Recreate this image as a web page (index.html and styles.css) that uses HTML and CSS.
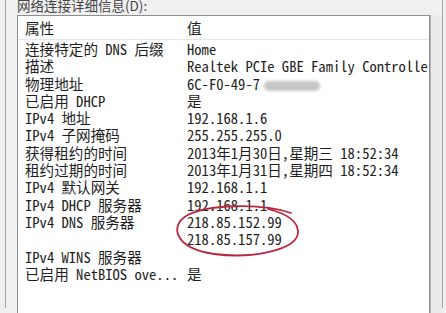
FILE: index.html
```html
<!DOCTYPE html>
<html lang="zh-CN">
<head>
    <meta charset="UTF-8">
    <title>网络连接详细信息</title>
    <link rel="stylesheet" href="styles.css">
</head>
<body>
    <div class="dialog">
        <div class="caption">网络连接详细信息(D):</div>
        <div class="panel">
            <div class="list">
                <div class="head">
                    <span>属性</span>
                    <span>值</span>
                </div>
                <div class="rows">
                    <span>连接特定的 DNS 后缀</span><span>Home</span>
                    <span>描述</span><span>Realtek PCIe GBE Family Controller</span>
                    <span>物理地址</span><span>6C-F0-49-7<span class="hidden-mac"></span></span>
                    <span>已启用 DHCP</span><span>是</span>
                    <span>IPv4 地址</span><span>192.168.1.6</span>
                    <span>IPv4 子网掩码</span><span>255.255.255.0</span>
                    <span>获得租约的时间</span><span>2013年1月30日,星期三 18:52:34</span>
                    <span>租约过期的时间</span><span>2013年1月31日,星期四 18:52:34</span>
                    <span>IPv4 默认网关</span><span>192.168.1.1</span>
                    <span>IPv4 DHCP 服务器</span><span>192.168.1.1</span>
                    <span>IPv4 DNS 服务器</span><span>218.85.152.99</span>
                    <span></span><span>218.85.157.99</span>
                    <span>IPv4 WINS 服务器</span><span></span>
                    <span>已启用 NetBIOS ove...</span><span>是</span>
                </div>
            </div>
            <div class="track"></div>
        </div>
    </div>

    <!-- hand drawn circle around the DNS servers -->
    <svg class="mark" width="446" height="313" viewBox="0 0 446 313">
        <path d="M 291 213 C 262 203, 206 204, 186 216 C 170 226, 174 248, 214 254 C 252 259, 298 250, 298 232 C 298 221, 288 214, 268 209"
              fill="none" stroke="#b8283f" stroke-width="1.8" stroke-linecap="round"/>
    </svg>
</body>
</html>
```

FILE: styles.css
```css
* {
    margin: 0;
    padding: 0;
    box-sizing: border-box;
}

body {
    position: relative;
    width: 446px;
    height: 313px;
    overflow: hidden;
    background: #f0f0f0;
    font-family: "Noto Sans Mono CJK SC", "Liberation Mono", monospace;
    color: #1e1e1e;
}

.dialog {
    margin-left: 5px;
    width: 438px;
    height: 313px;
    border-left: 1px solid #a4a4a4;
    border-right: 1px solid #a4a4a4;
    padding-left: 11px;
}

.caption {
    margin-top: -5px;
    height: 20px;
    line-height: 20px;
    font-family: "Noto Sans CJK SC", sans-serif;
    font-size: 13.5px;
    color: #444;
}

.panel {
    display: flex;
    height: 300px;
}

.list {
    width: 413px;
    border: 1px solid #8e9090;
    border-bottom: none;
    background: #fff;
    overflow: hidden;
    white-space: nowrap;
    font-size: 14.6px;
}

.track {
    flex: 1;
    border-left: 1px solid #b4b4b4;
    background: #ebebeb;
}

.head {
    display: grid;
    grid-template-columns: 162px 1fr;
    height: 24px;
    padding-left: 7px;
    align-items: center;
    border-bottom: 1px solid #e6e6e6;
}

.rows {
    display: grid;
    grid-template-columns: 162px 1fr;
    padding-left: 7px;
    line-height: 17.3px;
}

.hidden-mac {
    display: inline-block;
    width: 56px;
    height: 10px;
    margin-left: 4px;
    vertical-align: middle;
    background: #c6c6c6;
    border-radius: 5px;
    filter: blur(1.5px);
}

.mark {
    position: absolute;
    left: 0;
    top: 0;
}
```
